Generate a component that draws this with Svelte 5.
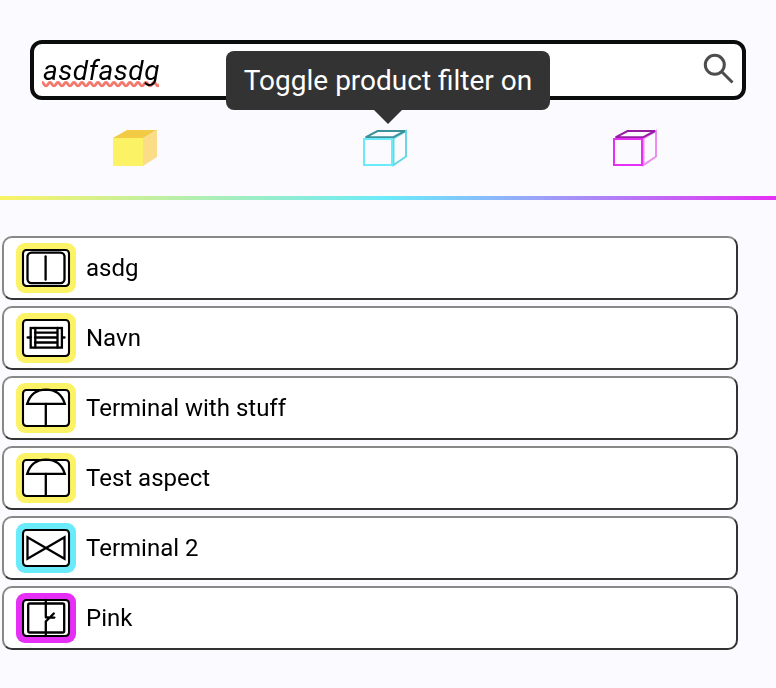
<script>
  const rows = [
    { name: 'asdg', color: '#fbf365', icon: 'panel' },
    { name: 'Navn', color: '#fbf365', icon: 'coil' },
    { name: 'Terminal with stuff', color: '#fbf365', icon: 'dome' },
    { name: 'Test aspect', color: '#fbf365', icon: 'dome' },
    { name: 'Terminal 2', color: '#69ebfb', icon: 'valve' },
    { name: 'Pink', color: '#e62ff5', icon: 'switch' }
  ];
  const cubes = [
    { name: 'function', front: '#fbf365', top: '#f2ca43', side: '#fbdd87', on: true },
    { name: 'product', front: '#69ebfb', top: '#3b9299', side: '#69d8e4', on: false },
    { name: 'location', front: '#e62ff5', top: '#971ca2', side: '#ec8df4', on: false }
  ];
  const wave =
    'M0 1.5' +
    Array.from({ length: 15 }, (_, i) => {
      const x = i * 8;
      return `C${x + 2} 1.5 ${x + 2} 4.8 ${x + 4} 4.8S${x + 6} 1.5 ${x + 8} 1.5`;
    }).join('');
  let query = $state('asdfasdg');
</script>

<main>
  <header>
    <label class="search">
      <input bind:value={query} spellcheck="false" aria-label="Search" />
      <svg class="wave" width="117" height="7" viewBox="0 0 117 7" aria-hidden="true">
        <path d={wave} fill="none" stroke="#f4796d" stroke-width="2.8" />
      </svg>
      <svg class="glass" width="32" height="32" viewBox="0 0 32 32" aria-hidden="true">
        <circle cx="11.8" cy="11.8" r="9.5" />
        <path d="M18.5 18.5L29.5 29.5" />
      </svg>
    </label>
    <div class="filters">
      {#each cubes as c}
        <button aria-label="Toggle {c.name} filter">
          <svg width="46" height="38" viewBox="0 0 46 38">
            {#if c.on}
              <path d="M1 9L15 1H45L31 9Z" fill={c.top} />
              <path d="M31 9L45 1V28L31 37Z" fill={c.side} />
              <path d="M1 9H31V37H1Z" fill={c.front} />
            {:else}
              <g fill="none" stroke-width="2">
                <path d="M31.5 9.5L44 2V27.5L31.5 36Z" stroke={c.side} />
                <path d="M3.5 8.3L15.5 2H43L31 8.3Z" stroke={c.top} />
                <path d="M2 10H30V36H2Z" stroke={c.front} />
              </g>
            {/if}
          </svg>
          {#if c.name === 'product'}
            <span class="tip">Toggle product filter on</span>
          {/if}
        </button>
      {/each}
    </div>
  </header>
  <div class="rule"></div>
  <ul>
    {#each rows as row}
      <li>
        <svg width="60" height="50" viewBox="0 0 60 50" aria-hidden="true">
          <rect width="60" height="50" rx="9" fill={row.color} />
          <rect x="7" y="7" width="46" height="36" rx="3.5" fill="#fff" stroke="#000" stroke-width="2.1" />
          <g fill="none" stroke="#000" stroke-width="2.3" stroke-linecap="round">
            {#if row.icon === 'panel'}
              <rect x="11.5" y="9.6" width="37" height="30.5" rx="4" />
              <path d="M29.6 13.3V36.7" />
            {:else if row.icon === 'coil'}
              <rect x="14.7" y="15" width="31.2" height="19.6" />
              <path d="M19.3 15V34.6M41.5 15V34.6M11.6 24.5H15M46 24.5H48.6" />
              <path d="M19 19.7H41M19 24.5H41M19 29.5H41" />
            {:else if row.icon === 'dome'}
              <path d="M11.2 20.8C14 11.5 21 6.6 30 6.6S46 11.5 48.8 20.8Z" />
              <path d="M29.8 21V43" />
            {:else if row.icon === 'valve'}
              <path d="M11.5 14.2L48.5 35.8V14.2L11.5 35.8Z" />
            {:else}
              <rect x="12.2" y="10.5" width="36" height="29" rx="1.5" />
              <path d="M29.8 7V23.5M29.8 43V28.5L37.8 20.5M29.8 24.4H32.5M34.5 24.6H38.4" />
            {/if}
          </g>
        </svg>
        <span>{row.name}</span>
      </li>
    {/each}
  </ul>
</main>

<style>
  :global(body) { background: #fafaff; }
  main {
    box-sizing: border-box;
    width: 776px;
    height: 688px;
    overflow: hidden;
    background: #fafaff;
    font-family: Roboto, sans-serif;
    color: #000;
  }
  header {
    box-sizing: border-box;
    height: 196px;
    padding: 40px 30px 0;
  }
  .search {
    position: relative;
    box-sizing: border-box;
    display: flex;
    align-items: flex-start;
    height: 60px;
    border: 4px solid #0b0d0c;
    border-radius: 12px;
    background: #fff;
    padding: 9px 7px 9px 8px;
  }
  input {
    flex: 1;
    min-width: 0;
    height: 34px;
    padding: 0 0 0 1px;
    border: 0;
    outline: 0;
    background: none;
    font: italic 28px Roboto, sans-serif;
    letter-spacing: 0.5px;
    color: #000;
  }
  .wave { position: absolute; left: 8px; top: 37px; mix-blend-mode: multiply; }
  .glass { fill: none; stroke: #4d4d4d; stroke-width: 3; }
  .filters {
    display: flex;
    justify-content: space-between;
    padding: 29px 88px 0 82px;
  }
  button {
    position: relative;
    display: flex;
    padding: 0;
    border: 0;
    background: none;
  }
  .tip {
    position: absolute;
    left: -136px;
    top: -78px;
    box-sizing: border-box;
    width: 324px;
    height: 59px;
    border-radius: 8px;
    background: #333;
    color: #fff;
    font: 28px/59px Roboto, sans-serif;
    text-align: center;
    white-space: nowrap;
  }
  .tip::after {
    content: '';
    position: absolute;
    left: 148px;
    top: 59px;
    border: 14px solid transparent;
    border-top-color: #333;
    border-bottom: 0;
  }
  .rule {
    height: 4px;
    background: linear-gradient(90deg, #fbf365, #69ebfb 50%, #e62ff5);
  }
  ul {
    display: flex;
    flex-direction: column;
    gap: 6px;
    list-style: none;
    margin: 0;
    padding: 36px 38px 0 2px;
  }
  li {
    box-sizing: border-box;
    display: flex;
    align-items: center;
    gap: 10px;
    height: 64px;
    padding-left: 12px;
    border: 2px solid;
    border-color: #888 #333 #333 #888;
    border-radius: 10px;
    background: #fff;
    font-size: 24px;
    line-height: 28px;
  }
</style>
